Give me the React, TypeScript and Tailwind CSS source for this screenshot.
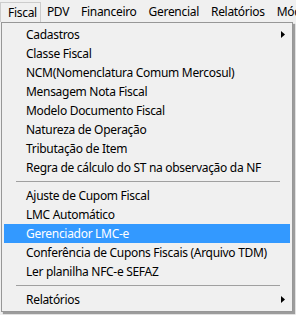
type Item = { label: string; sub?: boolean; active?: boolean } | 'sep'

const items: Item[] = [
  { label: 'Cadastros', sub: true },
  { label: 'Classe Fiscal' },
  { label: 'NCM(Nomenclatura Comum Mercosul)' },
  { label: 'Mensagem Nota Fiscal' },
  { label: 'Modelo Documento Fiscal' },
  { label: 'Natureza de Operação' },
  { label: 'Tributação de Item' },
  { label: 'Regra de cálculo do ST na observação da NF' },
  'sep',
  { label: 'Ajuste de Cupom Fiscal' },
  { label: 'LMC Automático' },
  { label: 'Gerenciador LMC-e', active: true },
  { label: 'Conferência de Cupons Fiscais (Arquivo TDM)' },
  { label: 'Ler planilha NFC-e SEFAZ' },
  'sep',
  { label: 'Relatórios', sub: true },
]

const topMenu = ['PDV', 'Financeiro', 'Gerencial', 'Relatórios', 'Módulos']

export default function App() {
  return (
    <div className="w-[296px] h-[315px] bg-[#f0f0f0] overflow-hidden text-[12px] tracking-[-0.3px] text-black font-['Noto_Sans',sans-serif]">
      {/* menu bar */}
      <div className="h-[22px] flex items-end whitespace-nowrap overflow-hidden">
        <div className="h-[20px] pl-[7px] pr-[3px] flex items-center border border-b-0 border-[#cccccc] bg-[#f0f0f0]">Fiscal</div>
        {topMenu.map((m) => (
          <div key={m} className="h-[20px] px-[6px] flex items-center">{m}</div>
        ))}
      </div>

      {/* dropdown */}
      <div className="ml-[1px] w-[292px] border border-[#979797] bg-[#f0f0f0] p-[2px] shadow-[2px_2px_1px_rgba(0,0,0,0.35)]">
        {items.map((it, i) =>
          it === 'sep' ? (
            <div key={i} className="h-[9px] flex items-center ml-[12px] mr-[10px]">
              <div className="h-px w-full bg-[#a0a0a0]" />
            </div>
          ) : (
            <div
              key={i}
              className={
                'h-[19px] pl-[22px] pr-[5px] flex items-center justify-between whitespace-nowrap ' +
                (it.active ? 'bg-[#3399ff] text-white' : '')
              }
            >
              <span>{it.label}</span>
              {it.sub && (
                <svg width="4" height="7" viewBox="0 0 4 7" className="fill-black">
                  <path d="M0 0 L4 3.5 L0 7 Z" />
                </svg>
              )}
            </div>
          )
        )}
      </div>
    </div>
  )
}
